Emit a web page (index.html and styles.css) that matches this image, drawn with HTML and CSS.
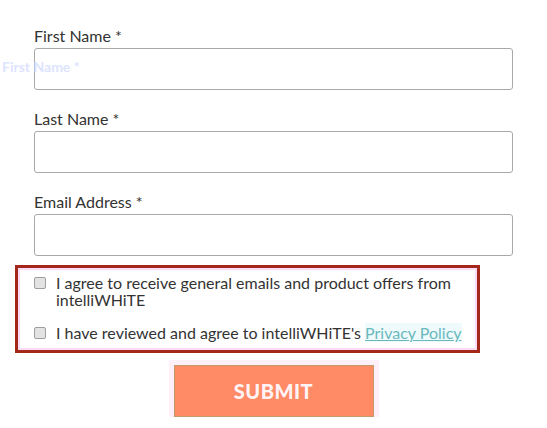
FILE: index.html
```html
<!DOCTYPE html>
<html lang="en">
<head>
    <meta charset="UTF-8">
    <title>Sign Up</title>
    <link rel="stylesheet" href="styles.css">
</head>
<body>
    <div class="ghost">First Name *</div>
    <form class="signup-form">
        <div class="field">
            <label for="firstName">First Name *</label>
            <input type="text" id="firstName">
        </div>
        <div class="field">
            <label for="lastName">Last Name *</label>
            <input type="text" id="lastName">
        </div>
        <div class="field">
            <label for="email">Email Address *</label>
            <input type="email" id="email">
        </div>
        <div class="consent-box">
            <label class="consent">
                <input type="checkbox">
                <span>I agree to receive general emails and product offers from intelliWHiTE</span>
            </label>
            <label class="consent">
                <input type="checkbox">
                <span>I have reviewed and agree to intelliWHiTE's <a href="#">Privacy Policy</a></span>
            </label>
        </div>
        <div class="actions">
            <button type="submit" class="submit-btn">SUBMIT</button>
        </div>
    </form>
</body>
</html>
```

FILE: styles.css
```css
body {
    margin: 0;
    font-family: 'Lato', 'Open Sans', sans-serif;
    background-color: #ffffff;
    color: #333333;
}

.ghost {
    position: absolute;
    left: 2px;
    top: 58px;
    font-size: 14px;
    font-weight: bold;
    color: #dde4ff;
}

.signup-form {
    padding-top: 26px;
    display: flex;
    flex-direction: column;
}

.field {
    margin: 0 34px 19px 34px;
}

.field:nth-child(3) {
    margin-bottom: 9px;
}

.field label {
    display: block;
    font-size: 16px;
    margin-bottom: 2px;
    line-height: 20px;
}

.field input {
    width: 100%;
    height: 42px;
    box-sizing: border-box;
    border: 1px solid #a9a9a9;
    border-radius: 3px;
    font-size: 16px;
}

.consent-box {
    margin-left: 15px;
    width: 465px;
    box-sizing: border-box;
    border: 3px solid #a3271a;
    box-shadow: inset 0 0 0 2px #fbdcf6;
    padding: 6px 0 9px 16px;
}

.consent {
    display: flex;
    align-items: flex-start;
    font-size: 16px;
    line-height: 17px;
    margin-bottom: 16px;
}

.consent:last-child {
    margin-bottom: 0;
}

.consent input {
    appearance: none;
    margin: 3px 10px 0 0;
    width: 12px;
    height: 12px;
    flex-shrink: 0;
    background-color: #e3e3e3;
    border: 1px solid #9e9e9e;
    border-radius: 2px;
}

.consent a {
    color: #6ab8bd;
    background-color: #eefafc;
}

.actions {
    display: flex;
    justify-content: center;
    padding-top: 12px;
}

.submit-btn {
    width: 200px;
    height: 52px;
    background-color: #fe8a66;
    border: 1px solid #c59a6a;
    box-shadow: 0 0 0 5px #fef0fb;
    color: #fff3f5;
    font-family: 'Lato', sans-serif;
    font-weight: 900;
    font-size: 20px;
    letter-spacing: 0.5px;
    cursor: pointer;
}
```
